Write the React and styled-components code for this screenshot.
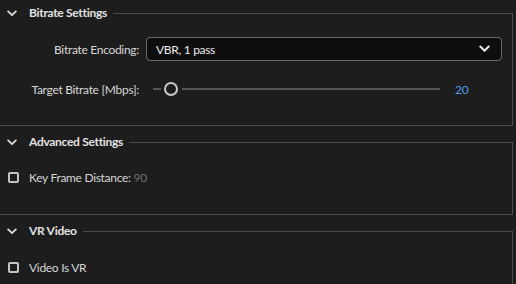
import styled, { createGlobalStyle } from "styled-components";

const Global = createGlobalStyle`
  html, body {
    margin: 0;
    padding: 0;
    background: #1d1d1d;
  }
  body {
    font-family: "Lato", "Open Sans", sans-serif;
    color: #d6d6d6;
    font-size: 12px;
    letter-spacing: -0.3px;
  }
`

const Chevron = ({ size = 10, color = "#d8d8d8" }) => (
    <svg width={size} height={size * 0.7} viewBox="0 0 10 7">
        <path d="M1.2 1.4 L5 5.2 L8.8 1.4" fill="none" stroke={color} strokeWidth="1.9" strokeLinecap="round" strokeLinejoin="round"/>
    </svg>
)

const Section = ({ title, top, pad, children }) => (
    <Panel $top={top}>
        <Header>
            <Toggle><Chevron /></Toggle>
            <Title>{title}</Title>
            <Rule />
        </Header>
        <Body $pad={pad}>
            {children}
        </Body>
    </Panel>
)

const App = () => {
    return (
        <>
            <Global />
            <Page>
                <Section title="Bitrate Settings" top={0} pad="11px 10px 28px 0">
                    <Row>
                        <Label>Bitrate Encoding:</Label>
                        <Select>
                            <span>VBR, 1 pass</span>
                            <Chevron size={11} color="#e6e6e6" />
                        </Select>
                    </Row>
                    <Row>
                        <Label>Target Bitrate [Mbps]:</Label>
                        <Slider>
                            <TrackStub />
                            <Thumb />
                            <Track />
                        </Slider>
                        <Value>20</Value>
                    </Row>
                </Section>
                <Section title="Advanced Settings" top={3} pad="14px 0 29px 0">
                    <Check>
                        <Box />
                        <span>Key Frame Distance: <Muted>90</Muted></span>
                    </Check>
                </Section>
                <Section title="VR Video" top={3} pad="15px 0 20px 0">
                    <Check>
                        <Box />
                        <span>Video Is VR</span>
                    </Check>
                </Section>
            </Page>
        </>
    )
}

const Page = styled.div`
  width: 513px;
  display: flex;
  flex-direction: column;
`

const Panel = styled.section`
  margin-top: ${p => p.$top}px;
  display: flex;
  flex-direction: column;
`

const Header = styled.div`
  height: 26px;
  display: flex;
  align-items: flex-start;
`

const Toggle = styled.div`
  width: 29px;
  height: 26px;
  display: flex;
  align-items: center;
  padding-left: 7px;
  box-sizing: border-box;
`

const Title = styled.div`
  font-weight: 700;
  font-size: 12px;
  color: #e2e2e2;
  line-height: 26px;
  padding-right: 6px;
`

const Rule = styled.div`
  flex: 1;
  align-self: stretch;
  margin-top: 13px;
  border-top: 1px solid #4a4a4a;
  border-right: 1px solid #4a4a4a;
`

const Body = styled.div`
  border-right: 1px solid #4a4a4a;
  border-bottom: 1px solid #4a4a4a;
  padding: ${p => p.$pad};
  display: flex;
  flex-direction: column;
  gap: 20px;
`

const Row = styled.div`
  display: flex;
  align-items: center;
  gap: 7px;
`

const Label = styled.div`
  width: 139px;
  text-align: right;
  color: #d6d6d6;
`

const Select = styled.div`
  flex: 1;
  height: 24px;
  box-sizing: border-box;
  border: 1px solid #6a6a6a;
  border-radius: 4px;
  background: #0e0e0e;
  display: flex;
  align-items: center;
  justify-content: space-between;
  padding: 0 11px 0 9px;
  color: #ececec;
`

const Slider = styled.div`
  width: 287px;
  margin-left: 7px;
  display: flex;
  align-items: center;
  height: 16px;
`

const TrackStub = styled.div`
  width: 8px;
  height: 2px;
  background: #555;
`

const Thumb = styled.div`
  width: 14px;
  height: 14px;
  box-sizing: border-box;
  border: 2px solid #c9c9c9;
  border-radius: 50%;
  margin: 0 4px 0 3px;
`

const Track = styled.div`
  flex: 1;
  height: 2px;
  background: #555;
`

const Value = styled.div`
  color: #4f9ee3;
  margin-left: 8px;
`

const Check = styled.label`
  display: flex;
  align-items: center;
  height: 16px;
  gap: 10px;
  padding-left: 8px;
`

const Box = styled.div`
  width: 11px;
  height: 11px;
  box-sizing: border-box;
  border: 2px solid #c4c4c4;
  border-radius: 2px;
`

const Muted = styled.span`
  color: #707070;
`

export default App
